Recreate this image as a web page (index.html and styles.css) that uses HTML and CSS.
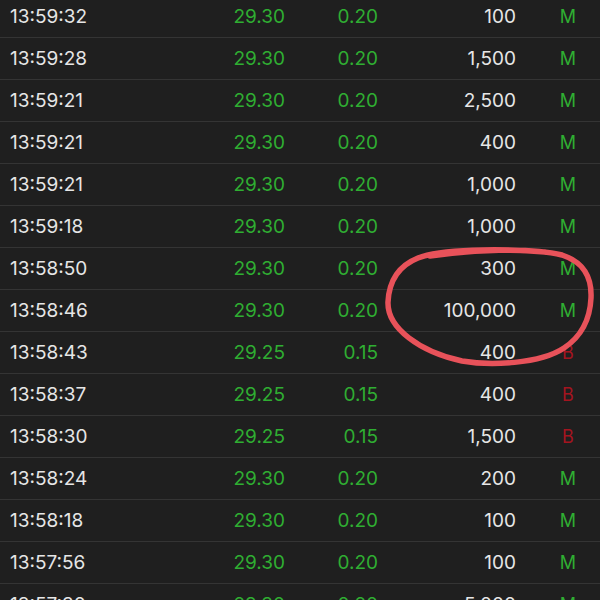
FILE: index.html
```html
<!DOCTYPE html>
<html lang="en">
<head>
  <meta charset="utf-8"/>
  <meta name="viewport" content="width=device-width, initial-scale=1.0">
  <title>Time &amp; Sales</title>
  <link rel="stylesheet" href="styles.css">
</head>
<body>
  <div class="trades">
    <div class="row"><span class="time">13:59:32</span><span class="price up">29.30</span><span class="chg up">0.20</span><span class="vol">100</span><span class="side up">M</span></div>
    <div class="row"><span class="time">13:59:28</span><span class="price up">29.30</span><span class="chg up">0.20</span><span class="vol">1,500</span><span class="side up">M</span></div>
    <div class="row"><span class="time">13:59:21</span><span class="price up">29.30</span><span class="chg up">0.20</span><span class="vol">2,500</span><span class="side up">M</span></div>
    <div class="row"><span class="time">13:59:21</span><span class="price up">29.30</span><span class="chg up">0.20</span><span class="vol">400</span><span class="side up">M</span></div>
    <div class="row"><span class="time">13:59:21</span><span class="price up">29.30</span><span class="chg up">0.20</span><span class="vol">1,000</span><span class="side up">M</span></div>
    <div class="row"><span class="time">13:59:18</span><span class="price up">29.30</span><span class="chg up">0.20</span><span class="vol">1,000</span><span class="side up">M</span></div>
    <div class="row"><span class="time">13:58:50</span><span class="price up">29.30</span><span class="chg up">0.20</span><span class="vol">300</span><span class="side up">M</span></div>
    <div class="row"><span class="time">13:58:46</span><span class="price up">29.30</span><span class="chg up">0.20</span><span class="vol">100,000</span><span class="side up">M</span></div>
    <div class="row"><span class="time">13:58:43</span><span class="price up">29.25</span><span class="chg up">0.15</span><span class="vol">400</span><span class="side down">B</span></div>
    <div class="row"><span class="time">13:58:37</span><span class="price up">29.25</span><span class="chg up">0.15</span><span class="vol">400</span><span class="side down">B</span></div>
    <div class="row"><span class="time">13:58:30</span><span class="price up">29.25</span><span class="chg up">0.15</span><span class="vol">1,500</span><span class="side down">B</span></div>
    <div class="row"><span class="time">13:58:24</span><span class="price up">29.30</span><span class="chg up">0.20</span><span class="vol">200</span><span class="side up">M</span></div>
    <div class="row"><span class="time">13:58:18</span><span class="price up">29.30</span><span class="chg up">0.20</span><span class="vol">100</span><span class="side up">M</span></div>
    <div class="row"><span class="time">13:57:56</span><span class="price up">29.30</span><span class="chg up">0.20</span><span class="vol">100</span><span class="side up">M</span></div>
    <div class="row"><span class="time">13:57:30</span><span class="price up">29.30</span><span class="chg up">0.20</span><span class="vol">5,000</span><span class="side up">M</span></div>
  </div>

  <!-- hand drawn marker round the big print -->
  <svg class="scribble" width="600" height="600" viewBox="0 0 600 600">
    <path d="M 545 252 C 500 248, 440 249, 418 258 C 398 266, 389 282, 388 302 C 387 328, 420 352, 462 361 C 490 366, 540 364, 564 348 C 582 336, 590 320, 591 298 C 592 276, 583 262, 562 255 C 530 247, 470 250, 430 256"
          fill="none" stroke="#e8525a" stroke-width="5.5" stroke-linecap="round"/>
  </svg>
</body>
</html>
```

FILE: styles.css
```css
body {
  margin: 0;
  background-color: #1f1f1f;
  font-family: Inter, 'Noto Sans', sans-serif;
  color: #e6e6e6;
  overflow: hidden;
}

.trades {
  margin-top: -4px;
}

.row {
  display: flex;
  align-items: center;
  height: 41px;
  padding-left: 10px;
  border-bottom: 1px solid #343434;
  font-size: 19px;
}

.time {
  width: 200px;
}

.price {
  width: 75px;
  text-align: right;
}

.chg {
  width: 93px;
  text-align: right;
}

.vol {
  width: 138px;
  text-align: right;
}

.side {
  width: 64px;
  margin-left: 20px;
  text-align: center;
  font-size: 18px;
}

.up {
  color: #2fae32;
}

.down {
  color: #a3141f;
}

.scribble {
  position: absolute;
  top: 0;
  left: 0;
  pointer-events: none;
}
```
